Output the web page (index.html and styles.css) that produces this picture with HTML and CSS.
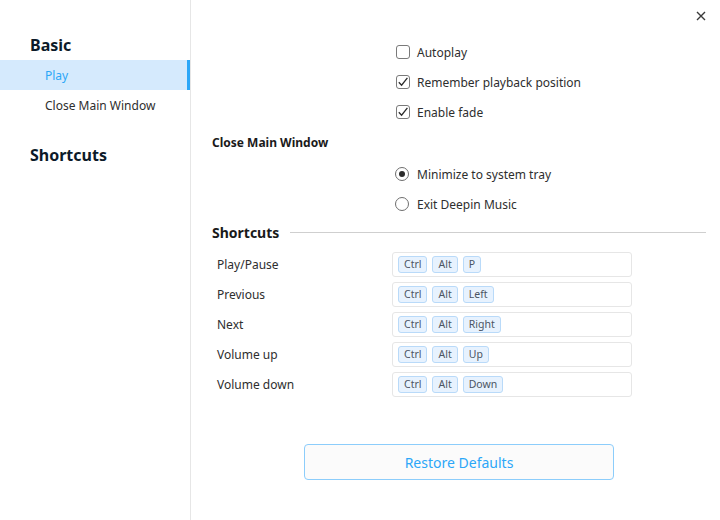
FILE: index.html
```html
<!DOCTYPE html>
<html>
<head>
<meta charset="utf-8">
<link rel="stylesheet" href="styles.css">
</head>
<body>
<div class="window">
  <aside class="sidebar">
    <div class="nav-group">Basic</div>
    <div class="nav-item active">Play</div>
    <div class="nav-item">Close Main Window</div>
    <div class="nav-group second">Shortcuts</div>
  </aside>
  <main class="content">
    <div class="opt-row"><span class="check"></span><span class="opt-label">Autoplay</span></div>
    <div class="opt-row"><span class="check checked"><svg width="12" height="12" viewBox="0 0 12 12"><path d="M1.8 6.2 L4.6 9.2 L10.4 1.8" fill="none" stroke="#2b2b2b" stroke-width="1.3"/></svg></span><span class="opt-label">Remember playback position</span></div>
    <div class="opt-row"><span class="check checked"><svg width="12" height="12" viewBox="0 0 12 12"><path d="M1.8 6.2 L4.6 9.2 L10.4 1.8" fill="none" stroke="#2b2b2b" stroke-width="1.3"/></svg></span><span class="opt-label">Enable fade</span></div>

    <div class="section-title">Close Main Window</div>
    <div class="opt-row"><span class="radio on"></span><span class="opt-label">Minimize to system tray</span></div>
    <div class="opt-row"><span class="radio"></span><span class="opt-label">Exit Deepin Music</span></div>

    <div class="section-head"><span>Shortcuts</span><span class="rule"></span></div>
    <div class="sc-list">
      <div class="sc-row"><span class="sc-label">Play/Pause</span><div class="sc-box"><span class="key">Ctrl</span><span class="key">Alt</span><span class="key">P</span></div></div>
      <div class="sc-row"><span class="sc-label">Previous</span><div class="sc-box"><span class="key">Ctrl</span><span class="key">Alt</span><span class="key">Left</span></div></div>
      <div class="sc-row"><span class="sc-label">Next</span><div class="sc-box"><span class="key">Ctrl</span><span class="key">Alt</span><span class="key">Right</span></div></div>
      <div class="sc-row"><span class="sc-label">Volume up</span><div class="sc-box"><span class="key">Ctrl</span><span class="key">Alt</span><span class="key">Up</span></div></div>
      <div class="sc-row"><span class="sc-label">Volume down</span><div class="sc-box"><span class="key">Ctrl</span><span class="key">Alt</span><span class="key">Down</span></div></div>
    </div>
    <div class="btn-wrap"><button class="restore">Restore Defaults</button></div>
  </main>
  <button class="close" aria-label="Close"><svg width="10" height="10" viewBox="0 0 10 10"><path d="M1 1 L9 9 M9 1 L1 9" stroke="#3a3a3a" stroke-width="1.4" fill="none"/></svg></button>
</div>
</body>
</html>
```
FILE: styles.css
```css
* { box-sizing: border-box; }
html, body { margin: 0; padding: 0; background: #fff; }
body { font-family: "Noto Sans", "Open Sans", sans-serif; color: #2e2e2e; }
.window { position: relative; display: flex; width: 720px; height: 520px; background: #fff; }
.sidebar { width: 191px; flex: none; border-right: 1px solid #e6e6e6; padding-top: 30px; }
.nav-group { height: 30px; line-height: 30px; padding-left: 30px; font-size: 16px; font-weight: 700; color: #0c1a29; }
.nav-group.second { margin-top: 20px; }
.nav-item { height: 30px; line-height: 31px; padding-left: 45px; font-size: 12px; color: #2e2e2e; }
.nav-item.active { background: #d5eafd; color: #2ca7f8; border-right: 3px solid #2ca7f8; }
.content { flex: 1; padding: 37px 14px 0 21px; }
.opt-row { height: 30px; display: flex; align-items: center; padding-left: 184px; font-size: 12px; }
.check { width: 14px; height: 14px; border: 1px solid #7a7a7a; border-radius: 3px; display: inline-flex; align-items: center; justify-content: center; margin-right: 7px; }
.check svg { display: block; }
.radio { width: 14px; height: 14px; border: 1px solid #6e6e6e; border-radius: 50%; display: inline-flex; align-items: center; justify-content: center; margin-right: 8px; margin-left: -1px; }
.radio.on::after { content: ""; width: 6px; height: 6px; border-radius: 50%; background: #2b2b2b; }
.opt-label { color: #2e2e2e; }
.section-title { height: 32px; line-height: 32px; font-size: 12px; font-weight: 700; color: #1a1a1a; }
.section-head { height: 26px; display: flex; align-items: center; font-size: 14px; font-weight: 700; color: #1a1a1a; }
.section-head .rule { flex: 1; height: 1px; background: #cfcfcf; margin-left: 11px; }
.sc-list { margin-top: 7px; display: flex; flex-direction: column; gap: 5px; }
.sc-row { display: flex; align-items: center; height: 25px; }
.sc-label { width: 180px; padding-left: 5px; font-size: 12px; color: #2e2e2e; }
.sc-box { width: 240px; height: 25px; border: 1px solid #e6e6e6; border-radius: 3px; display: flex; align-items: center; padding-left: 5px; gap: 5px; }
.key { height: 17px; line-height: 15px; padding: 0 5px; min-width: 17px; text-align: center; font-size: 10.5px; color: #4b5563; background: #e7f2fe; border: 1px solid #b9daf9; border-radius: 3px; }
.btn-wrap { display: flex; justify-content: center; margin-top: 47px; }
.restore { width: 310px; height: 36px; border: 1px solid #8ccdfb; border-radius: 4px; background: #fbfbfb; color: #2ca7f8; font-family: "Noto Sans", "Open Sans", sans-serif; font-size: 14px; cursor: pointer; }
.close { position: absolute; top: 11px; right: 14px; width: 10px; height: 10px; padding: 0; border: none; background: none; display: flex; }
```
